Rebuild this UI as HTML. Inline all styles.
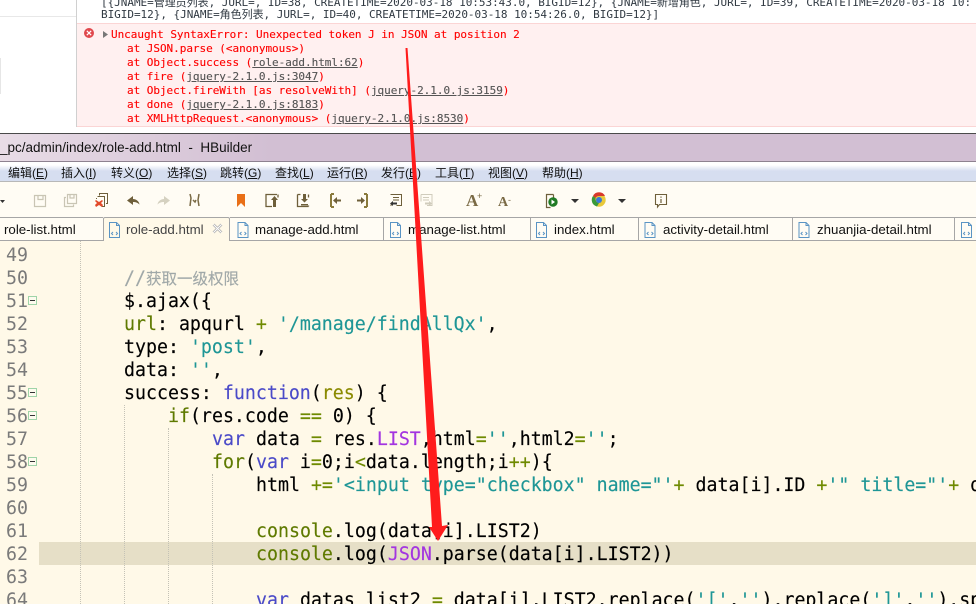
<!DOCTYPE html>
<html><head><meta charset="utf-8"><style>
*{margin:0;padding:0;box-sizing:border-box}
html,body{width:976px;height:604px;overflow:hidden;background:#fff}
body{position:relative;font-family:"Liberation Sans","Noto Sans CJK SC",sans-serif}
.a{position:absolute}
.c{position:absolute;left:101px;font:11px/14px "DejaVu Sans Mono","Noto Sans CJK SC",monospace;letter-spacing:-.03px;white-space:pre;color:#303942}
.e{position:absolute;font:11px/14px "DejaVu Sans Mono",monospace;letter-spacing:-.03px;white-space:pre;color:#f00;-webkit-text-stroke:.12px #f00}
.e u{color:#545454;-webkit-text-stroke:.12px #545454}
.m{position:absolute;top:164px;font:12px/18px "Liberation Sans","Noto Sans CJK SC",sans-serif;color:#111;white-space:pre}
.t{position:absolute;top:221px;font:13.3px/17px "Liberation Sans",sans-serif;color:#111;white-space:pre}
.v{position:absolute;top:218px;width:1px;height:22px;background:#a6a6a6}
.n{position:absolute;left:6px;width:24px;font:18.27px/23px "DejaVu Sans Mono",monospace;color:#7a7a7a}
.l{position:absolute;font:18.25px/23px "DejaVu Sans Mono","Noto Sans CJK SC",monospace;color:#000;white-space:pre;-webkit-text-stroke:.15px currentColor}
.f{position:absolute;left:28px;width:9px;height:9px;border:1px solid #9fd4a8;background:#fdfbee}
.f:after{content:"";position:absolute;left:1px;top:3px;width:5px;height:1px;background:#333}
.d{position:absolute;width:0;border-left:1px dotted #c4c2b6}
i{font-style:normal}
.k{color:#4a4ac8}.g{color:#5f7a00}.s{color:#1e9696}.p{color:#a335e0}.o{color:#6f8a00}.r{color:#8a8a00}
svg{position:absolute;left:0;top:0}
</style></head><body>
<div class="a" style="left:0;top:0;width:77px;height:133px;background:#fff;border-right:1px solid #d0d0d0"></div>
<div class="a" style="left:0;top:16px;width:76px;height:1px;background:#e8e8e8"></div>
<div class="a" style="left:0;top:58px;width:1px;height:36px;background:#e6e6e6"></div>
<div class="c" style="top:-4px">[{JNAME=管理员列表, JURL=, ID=38, CREATETIME=2020-03-18 10:53:43.0, BIGID=12}, {JNAME=新增角色, JURL=, ID=39, CREATETIME=2020-03-18 10:</div>
<div class="c" style="top:8px">BIGID=12}, {JNAME=角色列表, JURL=, ID=40, CREATETIME=2020-03-18 10:54:26.0, BIGID=12}]</div>
<div class="a" style="left:77px;top:23px;width:899px;height:104px;background:#fff0f0;border-top:1px solid #fbd5d5;border-bottom:1px solid #fbd5d5"></div>
<div class="e" style="left:111px;top:28px">Uncaught SyntaxError: Unexpected token J in JSON at position 2</div>
<div class="e" style="left:127px;top:42px">at JSON.parse (&lt;anonymous&gt;)</div>
<div class="e" style="left:127px;top:56px">at Object.success (<u>role-add.html:62</u>)</div>
<div class="e" style="left:127px;top:70px">at fire (<u>jquery-2.1.0.js:3047</u>)</div>
<div class="e" style="left:127px;top:84px">at Object.fireWith [as resolveWith] (<u>jquery-2.1.0.js:3159</u>)</div>
<div class="e" style="left:127px;top:98px">at done (<u>jquery-2.1.0.js:8183</u>)</div>
<div class="e" style="left:127px;top:112px">at XMLHttpRequest.&lt;anonymous&gt; (<u>jquery-2.1.0.js:8530</u>)</div>
<div class="a" style="left:0;top:127px;width:976px;height:6px;background:#fff"></div>
<div class="a" style="left:0;top:133px;width:976px;height:1px;background:#4a4a4a"></div>
<div class="a" style="left:0;top:134px;width:976px;height:28px;background:#d2bfd3"></div>
<div class="a" style="left:0;top:134px;width:270px;height:28px;background:linear-gradient(90deg,#e8dce6,#d2bfd3)"></div>
<div class="a" style="left:0;top:161px;width:976px;height:1px;background:#8e8290"></div>
<div class="a" style="left:0;top:139px;font:13.5px/18px 'Liberation Sans',sans-serif;color:#111;white-space:pre">_pc/admin/index/role-add.html  -  HBuilder</div>
<div class="a" style="left:0;top:162px;width:976px;height:20px;background:linear-gradient(#fff 0,#fff 3px,#d6def0 9px,#d6def0 100%);border-bottom:1px solid #b8b8b8"></div>
<div class="m" style="left:8px">编辑(<u>E</u>)</div><div class="m" style="left:61px">插入(<u>I</u>)</div><div class="m" style="left:111px">转义(<u>O</u>)</div><div class="m" style="left:167px">选择(<u>S</u>)</div><div class="m" style="left:220px">跳转(<u>G</u>)</div><div class="m" style="left:275px">查找(<u>L</u>)</div><div class="m" style="left:327px">运行(<u>R</u>)</div><div class="m" style="left:381px">发行(<u>E</u>)</div><div class="m" style="left:435px">工具(<u>T</u>)</div><div class="m" style="left:488px">视图(<u>V</u>)</div><div class="m" style="left:542px">帮助(<u>H</u>)</div>
<div class="a" style="left:0;top:182px;width:976px;height:36px;background:#fffcf4"></div>
<div class="a" style="left:0;top:218px;width:976px;height:22px;background:#fffcf4"></div>
<div class="a" style="left:0;top:217px;width:103px;height:1px;background:#a6a6a6"></div>
<div class="a" style="left:230px;top:217px;width:746px;height:1px;background:#a6a6a6"></div>
<div class="a" style="left:103px;top:217px;width:127px;height:24px;background:#fff9e8;border:1px solid #a6a6a6;border-bottom:0;border-radius:2px 2px 0 0"></div>
<div class="a" style="left:0;top:240px;width:103px;height:1px;background:#a6a6a6"></div>
<div class="a" style="left:230px;top:240px;width:746px;height:1px;background:#a6a6a6"></div>
<div class="v" style="left:383px"></div><div class="v" style="left:530px"></div><div class="v" style="left:638px"></div><div class="v" style="left:792px"></div><div class="v" style="left:954px"></div>
<div class="t" style="left:4px">role-list.html</div>
<div class="t" style="left:126px;color:#444">role-add.html</div>
<div class="t" style="left:255px">manage-add.html</div>
<div class="t" style="left:408px">manage-list.html</div>
<div class="t" style="left:554px">index.html</div>
<div class="t" style="left:663px">activity-detail.html</div>
<div class="t" style="left:817px">zhuanjia-detail.html</div>
<div class="a" style="left:0;top:241px;width:976px;height:363px;background:#fff9e8"></div>
<div class="a" style="left:39px;top:542px;width:937px;height:23px;background:#e6dfc7"></div>
<div class="d" style="left:80px;top:241px;height:363px"></div>
<div class="d" style="left:124px;top:405px;height:199px"></div>
<div class="d" style="left:168px;top:428px;height:176px"></div>
<div class="d" style="left:212px;top:474px;height:130px"></div>
<div class="f" style="top:296px"></div><div class="f" style="top:388px"></div><div class="f" style="top:411px"></div><div class="f" style="top:457px"></div>
<div class="a" style="left:0;top:1px;width:976px;height:603px">
<div class="n" style="top:243px">49</div><div class="n" style="top:266px">50</div><div class="n" style="top:289px">51</div><div class="n" style="top:312px">52</div><div class="n" style="top:335px">53</div><div class="n" style="top:358px">54</div><div class="n" style="top:381px">55</div><div class="n" style="top:404px">56</div><div class="n" style="top:427px">57</div><div class="n" style="top:450px">58</div><div class="n" style="top:473px">59</div><div class="n" style="top:496px">60</div><div class="n" style="top:519px">61</div><div class="n" style="top:542px">62</div><div class="n" style="top:565px">63</div><div class="n" style="top:588px">64</div>
<div class="l" style="left:124px;top:266px;color:#a0a8a8">//<span style="font-size:15.5px">获取一级权限</span></div>
<div class="l" style="left:124px;top:289px">$.ajax({</div>
<div class="l" style="left:124px;top:312px"><i class="g">url</i>: apqurl <i class="o">+</i> <i class="s">'/manage/findAllQx'</i>,</div>
<div class="l" style="left:124px;top:335px">type: <i class="s">'post'</i>,</div>
<div class="l" style="left:124px;top:358px">data: <i class="s">''</i>,</div>
<div class="l" style="left:124px;top:381px">success: <i class="k">function</i>(<i class="r">res</i>) {</div>
<div class="l" style="left:168px;top:404px"><i class="g">if</i>(res.code <i class="o">==</i> 0) {</div>
<div class="l" style="left:212px;top:427px"><i class="k">var</i> data <i class="o">=</i> res.<i class="p">LIST</i>,html<i class="o">=</i><i class="s">''</i>,html2<i class="o">=</i><i class="s">''</i>;</div>
<div class="l" style="left:212px;top:450px"><i class="g">for</i>(<i class="k">var</i> i<i class="o">=</i>0;i<i class="o">&lt;</i>data.length;i<i class="o">++</i>){</div>
<div class="l" style="left:256px;top:473px">html <i class="o">+=</i><i class="s">'&lt;input type="checkbox" name="'</i><i class="o">+</i> data[i].ID <i class="o">+</i><i class="s">'" title="'</i><i class="o">+</i> d</div>
<div class="l" style="left:256px;top:519px"><i class="g">console</i>.log(data[i].LIST2)</div>
<div class="l" style="left:256px;top:542px"><i class="g">console</i>.log(<i class="p">JSON</i>.parse(data[i].LIST2))</div>
<div class="l" style="left:256px;top:588px"><i class="k">var</i> datas_list2 <i class="o">=</i> data[i].LIST2.replace(<i class="s">'['</i>,<i class="s">''</i>).replace(<i class="s">']'</i>,<i class="s">''</i>).sp</div>
</div>
<svg width="976" height="604" viewBox="0 0 976 604">
<circle cx="89" cy="33" r="5" fill="#e0474c"/><path d="M86.8 30.8l4.4 4.4M91.2 30.8l-4.4 4.4" stroke="#fff" stroke-width="1.2"/>
<path d="M103 31l5 3.5-5 3.5z" fill="#777"/>
<path d="M0 200h5l-2.500 3z" fill="#333"/>
<g fill="none" stroke="#c9c5b4" stroke-width="1.200"><path d="M34.500 195.500h11v11h-11zM38 195.500v4h5v-4"/><path d="M66 197.500h-1.500v9h9v-2M67.500 194.500h9v9h-9zM70 194.500v3.500h4v-3.500"/></g>
<g fill="none" stroke="#6e5f3a" stroke-width="1"><path d="M99.500 195.500v-2h8v10h-1.500M97.500 196.500h7v10h-3M96.500 199v-1"/></g>
<path d="M96 200l3 2 3-2 1 1-2 2 2 2-1 2-3-2-3 2-1-2 2-2-2-2z" fill="#e24a2a"/>
<path d="M127 200.500l6-4.500v3c3 0 6 2 6.500 5.500-2-2-4-2.500-6.500-2.500v3z" fill="#6e5f3a"/>
<path d="M170 200.500l-6-4.500v3c-3 0-6 2-6.500 5.500 2-2 4-2.500 6.500-2.500v3z" fill="#d5d1c0"/>
<path d="M190 194l1 4-1 8M193 200l2 2 1-2M199 194l-1 6 1 6" stroke="#7a6a45" stroke-width="1.500" fill="none"/>
<path d="M237 194h8v13l-4-4-4 4z" fill="#e96f17"/>
<g fill="none" stroke="#6e5f3a" stroke-width="1.300"><path d="M277 194.500h-11v12h6M266 194.500v12M278 194.500v3"/><path d="M297.500 197v-2.500M297.500 194.500v12h11M308.500 194.500v3M308.500 206.500v-1M297.500 194.500h3"/></g>
<path d="M274.500 196l3.500 4h-2v7h-3v-7h-2z" fill="#6e5f3a"/>
<path d="M304.500 202.500l-3.500-3.500h2v-5h3v5h2zM301 204h7v1.500h-7z" fill="#6e5f3a"/>
<path d="M331 194v13M331 194h3M331 207h3" stroke="#8a7a3c" stroke-width="2" fill="none"/><path d="M333 200.500l4-3.500v2.500h4v2h-4v2.500z" fill="#6e5f3a"/>
<path d="M367 194v13M364 194h3M364 207h3" stroke="#8a7a3c" stroke-width="2" fill="none"/><path d="M365 200.500l-4-3.500v2.500h-4v2h4v2.500z" fill="#6e5f3a"/>
<g fill="none" stroke="#6e5f3a"><path d="M391 206v-1.500M390.500 194.500h11v11h-5M393 197.500h6M393 200h6"/></g><path d="M390 203.500l3-2.500v1.500h4v2h-4v1.500z" fill="#333"/>
<g fill="none" stroke="#d0ccbc"><path d="M421 194.500h11v11h-5M423 197.500h6M423 200h6M421 194.500v7"/></g><path d="M432 203.500l-3-2.500v1.500h-4v2h4v1.500z" fill="#d0ccbc"/>
<path d="M553.500 194.500h-7v13h4M546.500 194.500v13M553.500 194.500v3" fill="none" stroke="#6e5f3a" stroke-width="1.200"/>
<circle cx="553" cy="202" r="4.700" fill="#1f7a24"/><path d="M551.500 199.500l3.500 2.500-3.500 2.500z" fill="#fff"/>
<path d="M571 199h8l-4 4z" fill="#333"/><path d="M618 199h8l-4 4z" fill="#333"/>
<circle cx="599" cy="200" r="6.700" fill="#e8c93a"/><path d="M593 196a6.700 6.700 0 0 1 12 0h-6a4 4 0 0 0-3.500 2z" fill="#d8392b"/><path d="M593 196a6.700 6.700 0 0 0 4 10.500l2-3.500a4 4 0 0 1-3.500-5z" fill="#3a9a3a"/><circle cx="599" cy="200" r="3" fill="#3a78d8"/>
<path d="M655.500 194.500h11v10h-7l-2 2.500v-2.500h-2z" fill="none" stroke="#6e5f3a" stroke-width="1.100"/><path d="M661 196.500v1.300M661 199v4" stroke="#6e5f3a" stroke-width="1.200"/>
<g fill="none" stroke="#5a94c4"><path d="M109.500 222.500h7l3 3v12h-10z"/><path d="M116.500 222.500v3h3M113 232l-1.500 1.500 1.500 1.500M116 232l1.500 1.500-1.500 1.500"/></g>
<g fill="none" stroke="#5a94c4" transform="translate(128.500 0)"><path d="M109.500 222.500h7l3 3v12h-10z"/><path d="M116.500 222.500v3h3M113 232l-1.500 1.500 1.500 1.500M116 232l1.500 1.500-1.500 1.500"/></g>
<g fill="none" stroke="#5a94c4" transform="translate(281 0)"><path d="M109.500 222.500h7l3 3v12h-10z"/><path d="M116.500 222.500v3h3M113 232l-1.500 1.500 1.500 1.500M116 232l1.500 1.500-1.500 1.500"/></g>
<g fill="none" stroke="#5a94c4" transform="translate(427 0)"><path d="M109.500 222.500h7l3 3v12h-10z"/><path d="M116.500 222.500v3h3M113 232l-1.500 1.500 1.500 1.500M116 232l1.500 1.500-1.500 1.500"/></g>
<g fill="none" stroke="#5a94c4" transform="translate(535.500 0)"><path d="M109.500 222.500h7l3 3v12h-10z"/><path d="M116.500 222.500v3h3M113 232l-1.500 1.500 1.500 1.500M116 232l1.500 1.500-1.500 1.500"/></g>
<g fill="none" stroke="#5a94c4" transform="translate(689.500 0)"><path d="M109.500 222.500h7l3 3v12h-10z"/><path d="M116.500 222.500v3h3M113 232l-1.500 1.500 1.500 1.500M116 232l1.500 1.500-1.500 1.500"/></g>
<g fill="none" stroke="#5a94c4" transform="translate(852 0)"><path d="M109.500 222.500h7l3 3v12h-10z"/><path d="M116.500 222.500v3h3M113 232l-1.500 1.500 1.500 1.500M116 232l1.500 1.500-1.500 1.500"/></g>
<path d="M213.500 224.500l8 8M221.500 224.500l-8 8" stroke="#aaa" stroke-width="2.500"/><path d="M213.500 224.500l8 8M221.500 224.500l-8 8" stroke="#fff" stroke-width="1"/>
<text x="466" y="206" font-family="Liberation Serif" font-size="17" fill="#7a6a45" font-weight="bold">A</text><text x="477" y="199" font-family="Liberation Sans" font-size="9" fill="#7a6a45">+</text>
<text x="498" y="206" font-family="Liberation Serif" font-size="14" fill="#7a6a45" font-weight="bold">A</text><text x="508" y="203" font-family="Liberation Sans" font-size="9" fill="#7a6a45">-</text>
<path d="M405.500 48L407.500 48L442 526L448 525L438 541L429 527L432 527z" fill="#ff1c1c"/>
</svg>
</body></html>
